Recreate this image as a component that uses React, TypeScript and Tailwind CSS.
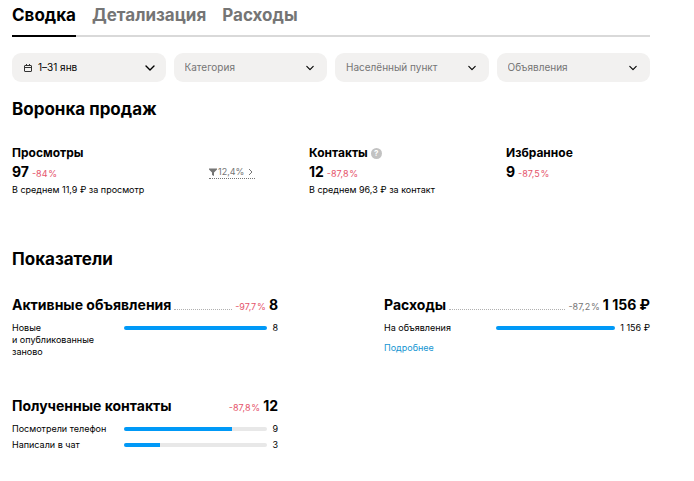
import { useState } from 'react';
import type { ReactNode } from 'react';

const tabs = ['Сводка', 'Детализация', 'Расходы'];
const filters = ['Категория', 'Населённый пункт', 'Объявления'];

type Row = { label: string; value: string; percent: number };

function Chevron({ className }: { className: string }) {
  return (
    <svg viewBox="0 0 10 6" fill="none" stroke="currentColor" strokeWidth="1.4" className={className}>
      <path d="M1 1l4 4 4-4" strokeLinecap="round" strokeLinejoin="round" />
    </svg>
  );
}

function CalendarIcon() {
  return (
    <svg viewBox="0 0 8 8" fill="none" stroke="#333" className="w-2 h-2">
      <rect x="0.5" y="1.5" width="7" height="6" rx="0.5" />
      <path d="M0.5 3.5h7M2.5 0v2M5.5 0v2" />
    </svg>
  );
}

function FilterSelect({ label }: { label: string }) {
  return (
    <label className="relative">
      <select
        aria-label={label}
        className="block w-full h-[29px] pl-[11px] pr-7 appearance-none rounded-[9px] bg-[#f2f1f0] text-[10px] text-[#757575]"
      >
        <option>{label}</option>
      </select>
      <Chevron className="absolute right-[13px] top-[12px] w-2 h-[6px] pointer-events-none" />
    </label>
  );
}

function Stat({ title, value, change, note, hint }: { title: string; value: string; change: string; note?: string; hint?: boolean }) {
  return (
    <div>
      <div className="flex items-center gap-[3px]">
        <h3 className="text-[12px] leading-4 font-bold">{title}</h3>
        {hint && (
          <button
            type="button"
            aria-label="Подсказка"
            className="w-[11px] h-[11px] rounded-full bg-[#c2c2c2] text-white text-[8px] leading-[11px] font-bold"
          >
            ?
          </button>
        )}
      </div>
      <p className="flex items-baseline gap-[3px] mt-[2px] leading-[18px] whitespace-nowrap">
        <span className="text-[14px] font-bold">{value}</span>
        <span className="text-[9px] text-[#e5546b]">{change}&#8202;%</span>
      </p>
      {note && <p className="text-[9px] leading-[14px] whitespace-nowrap">{note}</p>}
    </div>
  );
}

function Metric({ title, value, change, rows, muted, dotted, children }: {
  title: string;
  value: string;
  change: string;
  rows: Row[];
  muted?: boolean;
  dotted?: boolean;
  children?: ReactNode;
}) {
  return (
    <section>
      <div className="flex items-baseline gap-[3px] leading-5 whitespace-nowrap">
        <h3 className="text-[14px] font-bold">{title}</h3>
        <span className={dotted ? 'flex-1 border-b border-dotted border-[#b0b0b0]' : 'flex-1'} />
        <span className={muted ? 'text-[9px] text-[#757575]' : 'text-[9px] text-[#e5546b]'}>{change}&#8202;%</span>
        <span className="text-[14px] font-bold">{value}</span>
      </div>
      <div className="mt-[5px] flex flex-col gap-1">
        {rows.map((row) => (
          <div key={row.label} className="flex text-[9px] leading-3">
            <span className="w-[112px] whitespace-pre-line">{row.label}</span>
            <div className="flex-1 h-1 mt-1 rounded-full bg-[#e8e8e8] overflow-hidden">
              <div className="h-full bg-[#0099f7]" style={{ width: `${row.percent}%` }} />
            </div>
            <span className="ml-[5px] whitespace-nowrap">{row.value}</span>
          </div>
        ))}
      </div>
      {children}
    </section>
  );
}

export default function App() {
  const [active, setActive] = useState('Сводка');

  return (
    <main className="min-h-screen bg-white pl-3 pr-11 pb-7 text-black font-['Inter','Noto_Sans',sans-serif]">
      <nav className="flex gap-4 border-b-2 border-[#d9d9d9]">
        {tabs.map((tab) => (
          <button
            key={tab}
            type="button"
            onClick={() => setActive(tab)}
            className={
              tab === active
                ? '-mb-[2px] h-[37px] pb-[5px] border-b-2 border-black text-[17px] leading-7 font-bold'
                : '-mb-[2px] h-[37px] pb-[5px] border-b-2 border-transparent text-[17px] leading-7 font-bold text-[#757575]'
            }
          >
            {tab}
          </button>
        ))}
      </nav>

      <div className="mt-4 grid grid-cols-4 gap-2">
        <button type="button" className="flex items-center h-[29px] pl-3 pr-[11px] rounded-[9px] bg-[#f2f1f0] text-[10px]">
          <CalendarIcon />
          <span className="ml-[6px]">1–31 янв</span>
          <Chevron className="ml-auto w-[10px] h-[6px]" />
        </button>
        {filters.map((name) => (
          <FilterSelect key={name} label={name} />
        ))}
      </div>

      <h2 className="mt-[15px] text-[17px] leading-6 font-bold">Воронка продаж</h2>

      <div className="mt-6 grid grid-cols-[197fr_100fr_197fr_144fr]">
        <Stat title="Просмотры" value="97" change="-84" note="В среднем 11,9 ₽ за просмотр" />
        <div className="mt-5">
          <button type="button" className="flex items-center h-[14px] border-b border-dotted border-[#757575] text-[9px] text-[#757575]">
            <svg viewBox="0 0 8 8" fill="currentColor" className="w-2 h-2">
              <path d="M0 0.5h8v1L5 4.6V8L3 7V4.6L0 1.5z" />
            </svg>
            <span className="ml-px">12,4%</span>
            <svg viewBox="0 0 5 8" fill="none" stroke="currentColor" className="ml-1 mr-[2px] w-[5px] h-2">
              <path d="M1 1l3 3-3 3" />
            </svg>
          </button>
        </div>
        <Stat title="Контакты" value="12" change="-87,8" note="В среднем 96,3 ₽ за контакт" hint />
        <Stat title="Избранное" value="9" change="-87,5" />
      </div>

      <h2 className="mt-[50px] text-[17px] leading-6 font-bold">Показатели</h2>

      <div className="mt-6 grid grid-cols-2 gap-x-[106px] gap-y-[38px]">
        <Metric
          title="Активные объявления"
          value="8"
          change="-97,7"
          dotted
          rows={[{ label: 'Новые\nи опубликованные\nзаново', value: '8', percent: 100 }]}
        />
        <Metric
          title="Расходы"
          value="1 156 ₽"
          change="-87,2"
          muted
          dotted
          rows={[{ label: 'На объявления', value: '1 156 ₽', percent: 100 }]}
        >
          <a href="#expenses" className="block mt-2 text-[9px] leading-3 text-[#1495d2]">Подробнее</a>
        </Metric>
        <Metric
          title="Полученные контакты"
          value="12"
          change="-87,8"
          rows={[
            { label: 'Посмотрели телефон', value: '9', percent: 75 },
            { label: 'Написали в чат', value: '3', percent: 25 },
          ]}
        />
      </div>
    </main>
  );
}
